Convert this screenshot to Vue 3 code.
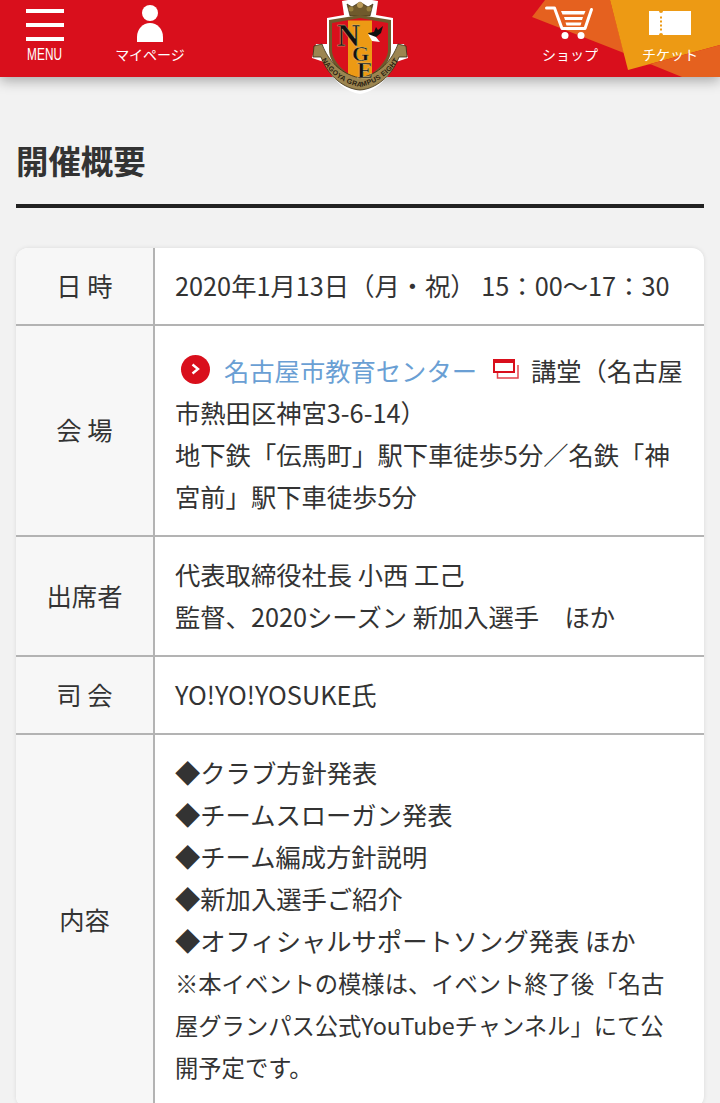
<script setup>
const rows = [
  { label: '日 時', lines: ['2020年1月13日（月・祝） 15：00〜17：30'] },
  { label: '出席者', lines: ['代表取締役社長 小西 工己', '監督、2020シーズン 新加入選手　ほか'] },
  { label: '司 会', lines: ['YO!YO!YOSUKE氏'] },
]
const program = [
  '◆クラブ方針発表',
  '◆チームスローガン発表',
  '◆チーム編成方針説明',
  '◆新加入選手ご紹介',
  '◆オフィシャルサポートソング発表 ほか',
]
</script>

<template>
  <header class="header">
    <svg class="header-bg" viewBox="0 0 200 77" width="200" height="77">
      <polygon points="25,0 12,17 104,53 90,0" fill="#e5611f" />
      <polygon points="90,0 108,70 200,45 200,0" fill="#ed9a14" />
      <polygon points="108,70 130,64 162,77 200,77 200,45" fill="#e5611f" />
    </svg>
    <div class="nav">
      <a class="nav-item menu">
        <span class="burger"><i></i><i></i><i></i></span>
        <span class="menu-label">MENU</span>
      </a>
      <a class="nav-item mypage">
        <svg width="26" height="38" viewBox="0 0 26 38">
          <circle cx="13" cy="8" r="8" fill="#fff" />
          <path d="M0 37V32C0 24 6 18 13 18S26 24 26 32V37Z" fill="#fff" />
        </svg>
        <span class="label">マイページ</span>
      </a>
    </div>
    <div class="nav">
      <a class="nav-item shop">
        <svg width="50" height="34" viewBox="0 0 50 34">
          <path d="M1.500 2H9.500L17 22.500H40L46.500 3.500" fill="none" stroke="#fff" stroke-width="3" stroke-linecap="round" stroke-linejoin="round" />
          <path d="M16 5H40.500L39 8.500H17.500ZM19 11H38L37 14H20ZM20.500 16.500H36.500L35.500 19.500H21.500Z" fill="#fff" />
          <circle cx="20" cy="29.500" r="3.500" fill="#fff" />
          <circle cx="36" cy="29.500" r="3.500" fill="#fff" />
        </svg>
        <span class="label">ショップ</span>
      </a>
      <a class="nav-item ticket">
        <svg width="42" height="24" viewBox="0 0 42 24">
          <path d="M0 0H10A2 2 0 0 0 14 0H42V24H14A2 2 0 0 0 10 24H0Z" fill="#fff" />
          <g fill="#ed9a14">
            <rect x="11" y="5.500" width="2" height="2" />
            <rect x="11" y="9.500" width="2" height="2" />
            <rect x="11" y="13.500" width="2" height="2" />
            <rect x="11" y="17.500" width="2" height="2" />
          </g>
        </svg>
        <span class="label">チケット</span>
      </a>
    </div>
    <svg class="crest" viewBox="0 0 140 100" width="140" height="100">
      <path d="M37 44V18L54 15L52 1L70 -2L88 1L86 15L103 18V44L114 44L118 58L106 62C98 80 84 92 70 94C56 92 42 80 34 62L22 58L26 44Z" fill="#fff" />
      <path d="M57 4L62 7L70 2L78 7L83 4L80 16H60Z" fill="#6f5a2c" stroke="#3b2f14" stroke-width=".7" />
      <circle cx="70" cy="5" r="3" fill="#b89a58" />
      <circle cx="61" cy="9" r="2.500" fill="#97803f" />
      <circle cx="79" cy="9" r="2.500" fill="#97803f" />
      <path d="M39 20L70 15L101 20V50C101 64 84 79 70 85C56 79 39 64 39 50Z" fill="#6f5a2c" />
      <path d="M42 23L70 18L98 23V50C98 62 83 75 70 81C57 75 42 62 42 50Z" fill="#d90f1c" />
      <path d="M58 20.500L82 20.500V74L70 81L58 74Z" fill="#ed9a14" />
      <path d="M24 46L32 44C36 55 46 73 70 78C94 73 104 55 108 44L116 46L117 57L109 57C102 76 86 89 70 90C54 89 38 76 31 57L23 57Z" fill="#9c8550" stroke="#3b2f14" stroke-width=".8" />
      <path id="ribbon-text" d="M28 53C36 71 52 84 70 87C88 84 104 71 112 53" fill="none" />
      <text class="crest-ribbon"><textPath href="#ribbon-text" startOffset="50%" text-anchor="middle">NAGOYA GRAMPUS EIGHT</textPath></text>
      <text class="crest-letter n" x="47" y="46">N</text>
      <text class="crest-letter g" x="62" y="61">G</text>
      <text class="crest-letter e" x="67" y="78">E</text>
      <path d="M78 33L84 32L86 27L88 30L93 26L91 33L86 37L90 42L82 39Z" fill="#111" />
      <path d="M78 34L86 37L90 42L82 41Z" fill="#fff" />
    </svg>
  </header>

  <main class="main">
    <h2 class="title">開催概要</h2>
    <div class="table">
      <div class="row">
        <div class="th">{{ rows[0].label }}</div>
        <div class="td"><p v-for="line in rows[0].lines" :key="line">{{ line }}</p></div>
      </div>
      <div class="row">
        <div class="th">会 場</div>
        <div class="td venue">
          <p>
            <span class="arrow">
              <svg width="10" height="12" viewBox="0 0 10 12"><path d="M1.500 1.500L7 6L1.500 10.500" fill="none" stroke="#fff" stroke-width="2.400" /></svg>
            </span><a class="link">名古屋市教育センター</a><svg class="ext" width="26" height="20" viewBox="0 0 26 20">
              <rect x="1" y="2" width="20" height="11" fill="none" stroke="#d90f1c" stroke-width="2" />
              <rect x="0" y="0" width="22" height="4" fill="#d90f1c" />
              <path d="M25 6V19H4.500V14" fill="none" stroke="#e4434c" stroke-width="1.500" />
            </svg>講堂（名古屋市熱田区神宮3-6-14）
          </p>
          <p>地下鉄「伝馬町」駅下車徒歩5分／名鉄「神宮前」駅下車徒歩5分</p>
        </div>
      </div>
      <div v-for="row in rows.slice(1)" :key="row.label" class="row">
        <div class="th">{{ row.label }}</div>
        <div class="td"><p v-for="line in row.lines" :key="line">{{ line }}</p></div>
      </div>
      <div class="row">
        <div class="th">内容</div>
        <div class="td">
          <p v-for="line in program" :key="line">{{ line }}</p>
          <p class="note">※本イベントの模様は、イベント終了後「名古屋グランパス公式YouTubeチャンネル」にて公開予定です。</p>
        </div>
      </div>
    </div>
  </main>
</template>

<style scoped>
.header { position: relative; z-index: 1; display: flex; justify-content: space-between; height: 77px; background: #d90f1c; box-shadow: 0 4px 12px rgba(0, 0, 0, .3); font-family: "Noto Sans CJK JP", sans-serif; color: #fff; }
.header-bg { position: absolute; top: 0; right: 0; }
.crest { position: absolute; top: 0; left: 290px; }
.crest-letter { font-family: "Liberation Serif", serif; font-weight: 700; fill: #111; stroke: #d8c48a; stroke-width: .4px; }
.crest-letter.n { font-size: 32px; }
.crest-letter.g { font-size: 22px; }
.crest-letter.e { font-size: 24px; }
.crest-ribbon { font-family: "Liberation Sans", sans-serif; font-size: 7px; font-weight: 700; fill: #2b2210; letter-spacing: .3px; }
.nav { position: relative; display: flex; }
.nav-item { display: flex; flex-direction: column; align-items: center; height: 77px; }
.menu { width: 90px; padding-top: 9px; box-sizing: border-box; }
.burger { display: flex; flex-direction: column; gap: 10px; width: 38px; }
.burger i { display: block; height: 4px; background: #fff; }
.menu-label { margin-top: 6px; font-family: "Liberation Sans", sans-serif; font-size: 16px; line-height: 16px; transform: scaleX(.74); }
.mypage { width: 120px; padding-top: 5px; box-sizing: border-box; }
.shop { width: 100px; padding-top: 6px; box-sizing: border-box; }
.ticket { width: 100px; padding-top: 11px; box-sizing: border-box; }
.label { position: absolute; top: 44px; font-size: 14px; line-height: 20px; white-space: nowrap; }

.main { padding: 0 16px; font-family: "Noto Sans CJK JP", sans-serif; color: #333; }
.title { margin: 0; padding: 60px 0 21px; border-bottom: 4px solid #222; font-size: 32.400px; line-height: 46px; font-weight: 700; }
.table { margin: 40px 0 30px; background: #fff; border-radius: 12px; overflow: hidden; box-shadow: 0 0 4px rgba(0, 0, 0, .1); }
.row { display: grid; grid-template-columns: 139px 1fr; border-bottom: 2px solid #b3b3b3; }
.th { display: flex; align-items: center; justify-content: center; padding-bottom: 3px; background: #f7f7f7; border-right: 2px solid #b3b3b3; font-size: 25.300px; }
.td { padding: 16px 18px 18px 20px; font-size: 25.300px; line-height: 42px; }
.td p { margin: 0; }
.venue { padding-top: 23px; }
.arrow { display: inline-flex; align-items: center; justify-content: center; width: 29px; height: 29px; margin: 0 14px 0 6px; border-radius: 50%; background: #d90f1c; vertical-align: 6px; }
.link { color: #6a9fd4; }
.ext { margin: 0 12px 0 16px; vertical-align: 2px; }
.note { padding-top: 1px; font-size: 23.300px; }
</style>

<style>
body { background: #f2f2f2; }
</style>
